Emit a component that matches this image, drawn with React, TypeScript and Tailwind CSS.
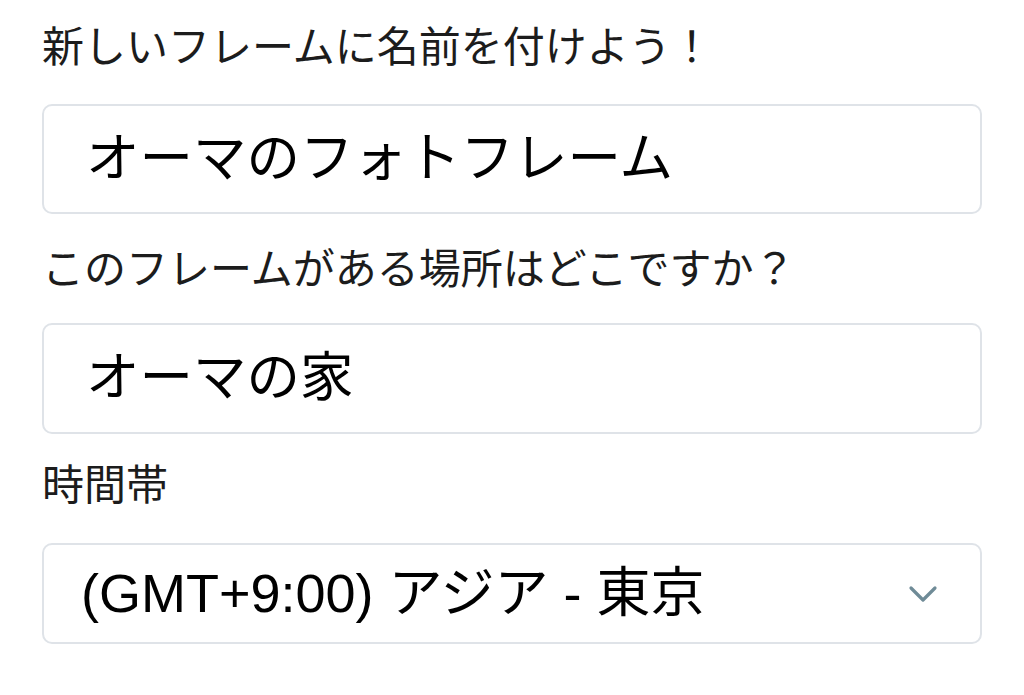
const FONT = "font-['Liberation_Sans','Noto_Sans_CJK_JP',sans-serif]";

function Label({ children, className = "" }: { children: React.ReactNode; className?: string }) {
  return (
    <div className={`h-16 leading-[64px] text-[42px] text-[#1c1c1c] whitespace-nowrap ${className}`}>
      {children}
    </div>
  );
}

function TextBox({ value, className = "" }: { value: string; className?: string }) {
  return (
    <div
      className={`flex items-center rounded-[10px] border-2 border-[#dfe3e8] bg-white pl-[42px] text-[53.5px] text-black whitespace-nowrap ${className}`}
    >
      {value}
    </div>
  );
}

export default function App() {
  return (
    <main className={`min-h-[695px] w-[1024px] bg-white pl-[42px] pr-[42px] pt-4 ${FONT}`}>
      <Label>新しいフレームに名前を付けよう！</Label>
      <TextBox value="オーマのフォトフレーム" className="mt-6 h-[110px]" />

      <Label className="mt-6">このフレームがある場所はどこですか？</Label>
      <TextBox value="オーマの家" className="mt-[21px] h-[111px]" />

      <Label className="mt-5">時間帯</Label>
      <div className="mt-[25px] flex h-[101px] items-center justify-between rounded-[10px] border-2 border-[#dfe3e8] bg-white pl-[37px] pr-[42px] text-[54px] text-black whitespace-nowrap">
        <span>(GMT+9:00) アジア - 東京</span>
        <svg width="30" height="20" viewBox="0 0 30 20" fill="none" className="shrink-0">
          <path d="M3 4 L15 16 L27 4" stroke="#6f8b97" strokeWidth="3.2" strokeLinecap="round" strokeLinejoin="round" />
        </svg>
      </div>
    </main>
  );
}
